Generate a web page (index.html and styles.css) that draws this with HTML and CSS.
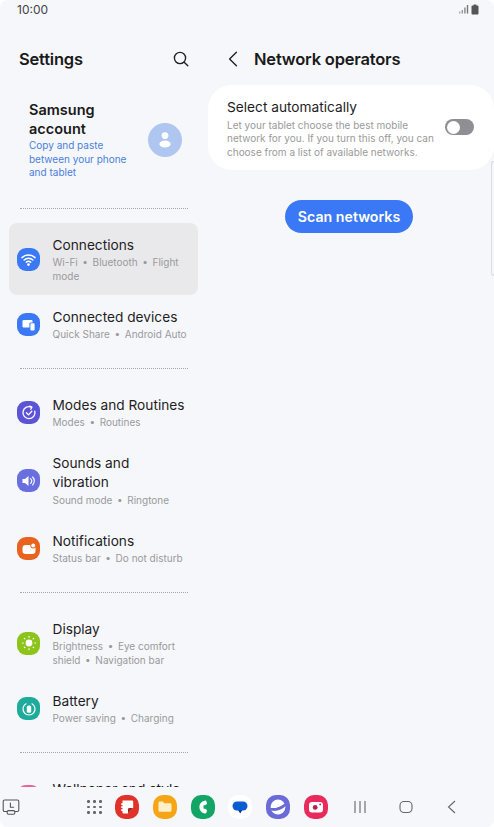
FILE: index.html
```html
<!DOCTYPE html>
<html lang="en">
<head>
    <meta charset="UTF-8">
    <meta name="viewport" content="width=device-width, initial-scale=1.0">
    <title>Network operators</title>
    <link rel="stylesheet" href="styles.css">
</head>
<body>
    <!-- Status bar -->
    <div class="status-bar">
        <span class="clock">10:00</span>
        <div class="status-icons">
            <svg width="12" height="10" viewBox="0 0 12 10"><rect x="1" y="7.5" width="1.4" height="2" fill="#aaa"/><rect x="3.6" y="6" width="1.4" height="3.5" fill="#999"/><rect x="6.2" y="3.5" width="1.4" height="6" fill="#888"/><rect x="8.8" y="1" width="1.4" height="8.5" fill="#777"/></svg>
            <svg width="8" height="11" viewBox="0 0 8 11"><path d="M2.6 0.5h2.8v1h1.2q.9 0 .9 .9v7.2q0 .9-.9 .9h-5.2q-.9 0-.9-.9v-7.2q0-.9 .9-.9h1.2z" fill="#555"/></svg>
        </div>
    </div>

    <div class="panes">
        <!-- Left list -->
        <div class="left-pane">
            <div class="left-head">
                <h1>Settings</h1>
                <svg class="search" width="18" height="18" viewBox="0 0 18 18" fill="none" stroke="#222" stroke-width="1.4" stroke-linecap="round"><circle cx="8" cy="8" r="5.6"/><path d="M12.2 12.2l3.6 3.6"/></svg>
            </div>

            <div class="account">
                <div class="account-text">
                    <div class="account-title">Samsung account</div>
                    <div class="account-sub">Copy and paste between your phone and tablet</div>
                </div>
                <div class="avatar">
                    <svg width="18" height="18" viewBox="0 0 18 18" fill="#fff"><circle cx="9" cy="4.6" r="3.4"/><ellipse cx="9" cy="13" rx="5.6" ry="3.6"/></svg>
                </div>
            </div>

            <div class="divider"></div>

            <div class="row active">
                <div class="app-icon c-blue">
                    <svg width="17" height="17" viewBox="0 0 16 16" fill="none" stroke="#fff" stroke-width="1.4" stroke-linecap="round"><path d="M1.8 6.2a9 9 0 0 1 12.4 0"/><path d="M3.9 8.4a6 6 0 0 1 8.2 0"/><path d="M6 10.5a3 3 0 0 1 4 0"/><circle cx="8" cy="12.8" r=".6" fill="#fff"/></svg>
                </div>
                <div class="row-text">
                    <div class="row-title">Connections</div>
                    <div class="row-sub">Wi-Fi&thinsp; • &thinsp;Bluetooth&thinsp; • &thinsp;Flight mode</div>
                </div>
            </div>
            <div class="row">
                <div class="app-icon c-blue">
                    <svg width="16" height="16" viewBox="0 0 16 16"><rect x="1.5" y="3" width="10" height="7.5" rx="1.2" fill="#fff"/><rect x="8.4" y="5.4" width="6" height="8.6" rx="1.2" fill="#3b78f6"/><rect x="9.4" y="6.2" width="4.2" height="7.2" rx=".9" fill="#fff"/></svg>
                </div>
                <div class="row-text">
                    <div class="row-title">Connected devices</div>
                    <div class="row-sub">Quick Share&thinsp; • &thinsp;Android Auto</div>
                </div>
            </div>

            <div class="divider"></div>

            <div class="row">
                <div class="app-icon c-purple">
                    <svg width="16" height="16" viewBox="0 0 16 16" fill="none" stroke="#fff" stroke-width="1.3" stroke-linecap="round" stroke-linejoin="round"><path d="M10.6 2.2a6 6 0 1 0 3.2 4"/><path d="M8.6 1.2l2.2 1-1 2"/><path d="M5.4 7.8l2.1 2.1 3.3-3.6"/></svg>
                </div>
                <div class="row-text">
                    <div class="row-title">Modes and Routines</div>
                    <div class="row-sub">Modes&thinsp; • &thinsp;Routines</div>
                </div>
            </div>
            <div class="row">
                <div class="app-icon c-violet">
                    <svg width="16" height="16" viewBox="0 0 16 16" fill="none"><path d="M1.5 6h2.4l3.6-3v10l-3.6-3H1.5z" fill="#fff"/><path d="M9.6 5.6a3.4 3.4 0 0 1 0 4.8M11.6 4a5.6 5.6 0 0 1 0 8" stroke="#fff" stroke-width="1.1" stroke-linecap="round"/></svg>
                </div>
                <div class="row-text">
                    <div class="row-title">Sounds and<br>vibration</div>
                    <div class="row-sub">Sound mode&thinsp; • &thinsp;Ringtone</div>
                </div>
            </div>
            <div class="row">
                <div class="app-icon c-orange">
                    <svg width="16" height="16" viewBox="0 0 16 16"><rect x="1.5" y="4" width="13" height="9" rx="3.2" fill="#fff"/><circle cx="12.2" cy="4.6" r="2.9" fill="#e8631f"/><circle cx="12.2" cy="4.6" r="2" fill="#fff"/></svg>
                </div>
                <div class="row-text">
                    <div class="row-title">Notifications</div>
                    <div class="row-sub">Status bar&thinsp; • &thinsp;Do not disturb</div>
                </div>
            </div>

            <div class="divider"></div>

            <div class="row">
                <div class="app-icon c-green">
                    <svg width="16" height="16" viewBox="0 0 16 16" fill="none" stroke="#fff" stroke-width="1.2" stroke-linecap="round"><circle cx="8" cy="8" r="3.4" fill="#fff" stroke="none"/><path d="M8 1.4v.8M8 13.8v.8M1.4 8h.8M13.8 8h.8M3.3 3.3l.6.6M12.1 12.1l.6.6M3.3 12.7l.6-.6M12.1 3.9l.6-.6"/></svg>
                </div>
                <div class="row-text">
                    <div class="row-title">Display</div>
                    <div class="row-sub">Brightness&thinsp; • &thinsp;Eye comfort shield&thinsp; • &thinsp;Navigation bar</div>
                </div>
            </div>
            <div class="row">
                <div class="app-icon c-teal">
                    <svg width="16" height="16" viewBox="0 0 16 16" fill="none"><path d="M5 2.8a6 6 0 1 0 6 0" stroke="#fff" stroke-width="1.2" stroke-linecap="round"/><rect x="5.8" y="4.4" width="4.4" height="7.4" rx="1.6" fill="#fff"/></svg>
                </div>
                <div class="row-text">
                    <div class="row-title">Battery</div>
                    <div class="row-sub">Power saving&thinsp; • &thinsp;Charging</div>
                </div>
            </div>

            <div class="divider"></div>

            <div class="row">
                <div class="app-icon c-pink"></div>
                <div class="row-text no-sub">
                    <div class="row-title">Wallpaper and style</div>
                </div>
            </div>
        </div>

        <!-- Right detail -->
        <div class="right-pane">
            <div class="right-head">
                <svg width="10" height="16" viewBox="0 0 10 16" fill="none" stroke="#222" stroke-width="1.4" stroke-linecap="round" stroke-linejoin="round"><path d="M8.4 1.2L1.6 8l6.8 6.8"/></svg>
                <h1>Network operators</h1>
            </div>
            <div class="card">
                <div class="card-text">
                    <div class="row-title">Select automatically</div>
                    <div class="card-sub">Let your tablet choose the best mobile network for you. If you turn this off, you can choose from a list of available networks.</div>
                </div>
                <div class="toggle"><div class="knob"></div></div>
            </div>
            <div class="scan-wrap">
                <button class="scan">Scan networks</button>
            </div>
            <div class="scroll-handle"></div>
        </div>
    </div>

    <!-- Bottom bar -->
    <div class="nav-bar">
        <svg class="recent" width="18" height="18" viewBox="0 0 18 18" fill="none" stroke="#555" stroke-width="1.1" stroke-linecap="round" stroke-linejoin="round"><path d="M5 13.5H2.6q-1.4 0-1.4-1.4V3.4Q1.2 2 2.6 2h12.8q1.4 0 1.4 1.4v8.7q0 1.4-1.4 1.4H13"/><path d="M8.4 5v4.2h3.2"/><rect x="5.2" y="12.6" width="7.6" height="3.6" rx="1.2"/></svg>
        <div class="apps-grid">
            <i></i><i></i><i></i><i></i><i></i><i></i><i></i><i></i><i></i>
        </div>
        <div class="dock">
            <div class="dock-icon d-red">
                <svg width="16" height="16" viewBox="0 0 16 16"><path d="M3.5 1.5h9.5q1.2 0 1.2 1.2v6.3l-5.2 5.5H4.5q-1 0-1-1v-1.6H2.2v-1.6h1.3V8.9H2.2V7.3h1.3V5.9H2.2V4.3h1.3z" fill="#fff"/><path d="M14.2 9h-4q-1.2 0-1.2 1.2v4.3z" fill="#a8231f"/></svg>
            </div>
            <div class="dock-icon d-yellow">
                <svg width="16" height="16" viewBox="0 0 16 16"><path d="M1.5 3.8q0-1.2 1.2-1.2h3.2l1.4 1.6h6q1.2 0 1.2 1.2v6.2q0 1.2-1.2 1.2H2.7q-1.2 0-1.2-1.2z" fill="#fff0c8"/></svg>
            </div>
            <div class="dock-icon d-green">
                <svg width="16" height="16" viewBox="0 0 16 16"><path d="M10.2 1.4C6.4 2.2 4.4 4.8 4.4 8s2 5.8 5.8 6.6c.7 0 1-.4 1.2-1l.6-1.9c.1-.5 0-.8-.4-1l-1.5-.9c-.5-.2-.9-.1-1.2.3-.6-1.4-.6-2.8 0-4.2.3.4.7.5 1.2.3l1.5-.9c.4-.2.5-.5.4-1l-.6-1.9c-.2-.6-.5-1-1.2-1z" fill="#fff"/></svg>
            </div>
            <div class="dock-icon d-white">
                <svg width="18" height="18" viewBox="0 0 18 18"><path d="M7 12l2.2 3.4 2.2-3.4z" fill="#0b2f8a"/><rect x="1.5" y="3.5" width="15" height="9" rx="4.5" fill="#0b5bd3"/></svg>
            </div>
            <div class="dock-icon d-internet">
                <svg width="18" height="18" viewBox="0 0 18 18"><circle cx="9" cy="9" r="7.4" fill="#fff"/><path d="M1.4 9.8c3.8 1 9.6-.6 14.4-4.4l1 2.4c-4 4.4-10.4 6.4-15 4.4z" fill="#6a6ad8"/></svg>
            </div>
            <div class="dock-icon d-camera">
                <svg width="16" height="16" viewBox="0 0 16 16"><rect x="1" y="3" width="14" height="10.5" rx="3" fill="#fff"/><circle cx="7.2" cy="8.4" r="2.4" fill="#b3204a"/><circle cx="12.2" cy="5.4" r=".9" fill="#b3204a"/></svg>
            </div>
        </div>
        <div class="soft-keys">
            <svg width="14" height="14" viewBox="0 0 14 14" stroke="#666" stroke-width="1.1"><path d="M2 1v12M7 1v12M12 1v12"/></svg>
            <svg width="14" height="14" viewBox="0 0 14 14" fill="none" stroke="#666" stroke-width="1.1"><rect x="1" y="1.5" width="12" height="11" rx="4"/></svg>
            <svg width="14" height="14" viewBox="0 0 14 14" fill="none" stroke="#666" stroke-width="1.1"><path d="M10 1L3.5 7l6.5 6"/></svg>
        </div>
    </div>
</body>
</html>
```
FILE: styles.css
```css
html {
    background: #fff;
}
body {
    font-family: 'Inter', 'Roboto', sans-serif;
    margin: 0;
    padding: 0;
    background: #f6f7fb;
    color: #1a1a1a;
    width: 494px;
    height: 827px;
    overflow: hidden;
    border-radius: 8px;
    display: flex;
    flex-direction: column;
}
h1 {
    font-size: 16.5px;
    font-weight: 600;
    margin: 0;
    letter-spacing: -0.2px;
}

/* status bar */
.status-bar {
    height: 20px;
    display: flex;
    justify-content: space-between;
    align-items: center;
    padding: 0 17px 2px;
    box-sizing: border-box;
    flex-shrink: 0;
}
.clock {
    font-size: 12px;
    color: #444;
}
.status-icons {
    display: flex;
    align-items: center;
    gap: 1px;
    margin-right: -2px;
}

.panes {
    display: flex;
    flex: 1;
    min-height: 0;
}

/* left */
.left-pane {
    width: 208px;
    flex-shrink: 0;
    overflow: hidden;
    box-sizing: border-box;
    padding-left: 9px;
    padding-right: 10px;
}
.left-head {
    display: flex;
    justify-content: space-between;
    align-items: center;
    height: 28px;
    margin-top: 25px;
    padding: 0 8px 0 10px;
}
.account {
    display: flex;
    align-items: center;
    justify-content: space-between;
    padding: 0 16px 0 20px;
    margin-top: 13px;
    height: 107.5px;
}
.account-text {
    width: 108px;
}
.account-title {
    font-size: 14.5px;
    font-weight: 600;
    line-height: 19px;
    width: 90px;
}
.account-sub {
    font-size: 10px;
    line-height: 13.5px;
    color: #4a7fdc;
    margin-top: 1px;
}
.avatar {
    width: 34px;
    height: 34px;
    border-radius: 50%;
    background: #aec6f0;
    display: flex;
    align-items: center;
    justify-content: center;
}
.divider {
    border-top: 1px dotted #a8a8a8;
    margin: 14px 10px 14.5px 11px;
}
.row {
    display: flex;
    align-items: center;
    padding: 12.5px 8px 12px;
    border-radius: 8px;
}
.row.active {
    background: #e9e9ec;
}
.app-icon {
    width: 23px;
    height: 23px;
    border-radius: 9px;
    flex-shrink: 0;
    display: flex;
    align-items: center;
    justify-content: center;
}
.c-blue { background: #3b78f6; }
.c-purple { background: #5b54d6; }
.c-violet { background: #6a6fe0; }
.c-orange { background: #e8631f; }
.c-green { background: #8cc41a; }
.c-teal { background: #1eab9b; }
.c-pink { background: #e6668f; }
.row-text {
    margin-left: 12.5px;
    min-width: 0;
}
.row-text.no-sub {
    padding-bottom: 15px;
}
.row-title {
    font-size: 13.7px;
    line-height: 19px;
    color: #1e1e1e;
}
.row-sub {
    font-size: 10px;
    line-height: 13.5px;
    color: #9a9a9a;
    margin-top: 1.5px;
}

/* right */
.right-pane {
    flex: 1;
    min-width: 0;
    position: relative;
}
.right-head {
    display: flex;
    align-items: center;
    gap: 16px;
    height: 28px;
    margin-top: 25px;
    padding-left: 20px;
}
.card {
    background: #fff;
    border-radius: 24px;
    margin-top: 12px;
    height: 85px;
    box-sizing: border-box;
    padding: 13px 20px 0 19px;
    display: flex;
    justify-content: space-between;
    align-items: flex-start;
}
.card-text {
    width: 212px;
}
.card-sub {
    font-size: 10px;
    line-height: 13.5px;
    color: #9a9a9a;
    margin-top: 1.5px;
}
.toggle {
    width: 29px;
    height: 16px;
    margin-top: 21px;
    border-radius: 8px;
    background: #8e8e93;
    position: relative;
}
.knob {
    position: absolute;
    left: 1.5px;
    top: 1.5px;
    width: 13px;
    height: 13px;
    border-radius: 50%;
    background: #fff;
}
.scan-wrap {
    display: flex;
    justify-content: center;
    margin-top: 30px;
    padding-right: 4px;
}
.scan {
    width: 128px;
    height: 33px;
    border: none;
    border-radius: 17px;
    background: #3b78f6;
    color: #fff;
    font-family: inherit;
    font-size: 14.2px;
    font-weight: 600;
    padding: 0;
}
.scroll-handle {
    position: absolute;
    right: 0;
    top: 141px;
    width: 2px;
    height: 113px;
    border: 1px solid #dcdce0;
    border-right: none;
    border-radius: 3px 0 0 3px;
}

/* bottom bar */
.nav-bar {
    height: 40px;
    flex-shrink: 0;
    background: #f6f7fb;
    display: flex;
    align-items: center;
}
.recent {
    margin-left: 2px;
}
.apps-grid {
    display: grid;
    grid-template-columns: repeat(3, 3px);
    gap: 3px;
    margin-left: 67px;
}
.apps-grid i {
    width: 2.5px;
    height: 2.5px;
    border-radius: 50%;
    background: #666;
}
.dock {
    display: flex;
    gap: 13.8px;
    margin-left: 13px;
}
.dock-icon {
    width: 24px;
    height: 24px;
    border-radius: 10px;
    display: flex;
    align-items: center;
    justify-content: center;
}
.d-red { background: #e0322b; }
.d-yellow { background: #f5a516; }
.d-green { background: #12a566; }
.d-white { background: #fff; }
.d-internet { background: #6a6ad8; }
.d-camera { background: #e92a5c; }
.soft-keys {
    display: flex;
    gap: 32px;
    margin-left: 25px;
}
```
